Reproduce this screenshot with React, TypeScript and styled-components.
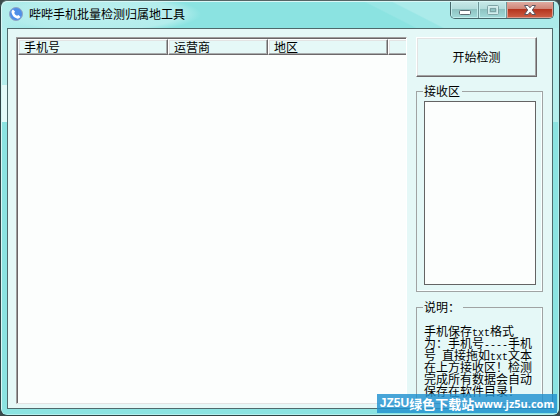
import React from "react";
import styled, { createGlobalStyle } from "styled-components";

const Global = createGlobalStyle`
  * { box-sizing: border-box; }
  body {
    margin: 0;
    background: #3c4a4c;
    font-family: "Noto Sans CJK SC", sans-serif;
    font-size: 12px;
    line-height: 16px;
    color: #000;
  }
  button, textarea { font: inherit; color: inherit; }
`;

const Window = styled.div`
  position: relative;
  min-height: 100vh;
  display: flex;
  flex-direction: column;
  padding: 0 6px 6px;
  border: 1px solid #2f4446;
  border-top-color: #566;
  border-radius: 7px;
  background:
    linear-gradient(to right, #b5eeed 0, #b5eeed 8px, transparent 8px) 0 0 / 100% 84px no-repeat,
    linear-gradient(to right, #e4faf9 0, #e4faf9 8px, transparent 8px) 0 84px / 100% 37px no-repeat,
    linear-gradient(to left, #b4efed 0, #b4efed 8px, transparent 8px) 0 0 / 100% 121px no-repeat,
    #8be3e1;
  box-shadow: inset 1px 1px 0 #d9f7f6, inset -1px -1px 0 #b4efee;
`;

const TitleBar = styled.header`
  height: 27px;
  margin: 0 -5px;
  padding-left: 6px;
  display: flex;
  align-items: flex-start;
  border-radius: 6px 6px 0 0;
  border-top: 1px solid #d9f7f6;
  background:
    radial-gradient(ellipse 105px 20px at 94px 12px, #bdf0ef 0%, #b3edec 80%, transparent 100%),
    linear-gradient(27deg, transparent 68%, #98e6e5 68.5%, #98e6e5 72.5%, #abebea 73%),
    linear-gradient(to right, #b3edec 0, #8be3e1 60px);
`;

const AppIcon = styled.svg`
  width: 16px;
  height: 16px;
  margin-top: 4px;
`;

const Title = styled.h1`
  flex: 1;
  margin: 3px 0 0 5px;
  font-size: 12px;
  line-height: 18px;
  font-weight: 400;
  white-space: nowrap;
`;

const Controls = styled.div`
  display: flex;
  height: 17px;
  margin-right: 4px;
  border: 1px solid #46676a;
  border-top: 0;
  border-radius: 0 0 5px 5px;
  overflow: hidden;
`;

const ControlButton = styled.button<{ $kind: "plain" | "close" }>`
  display: flex;
  align-items: center;
  justify-content: center;
  width: ${(p) => (p.$kind === "close" ? 46 : 27)}px;
  padding: 0;
  border: 1px solid ${(p) => (p.$kind === "close" ? "#dd9b8e" : "#c5eeee")};
  border-top: 0;
  background: ${(p) =>
    p.$kind === "close"
      ? "linear-gradient(#dfaca2 0%, #cf8374 48%, #b5351f 50%, #cb5c42 100%)"
      : "linear-gradient(#c6e8e7 0%, #b2dcdb 48%, #8fc3c2 50%, #a0d8d7 100%)"};
  & + & { box-shadow: -1px 0 0 #6f9597; margin-left: 1px; }
  svg { display: block; }
`;

const Client = styled.main`
  flex: 1;
  display: flex;
  gap: 9px;
  padding: 8px 9px 4px 8px;
  border: 1px solid #4f696b;
  background: #e5f8f7;
`;

const ListView = styled.div`
  flex: 1;
  border: 1px solid;
  border-color: #a09e9e #fff #e3e3e3 #a09e9e;
  box-shadow: inset 1px 1px 0 #696567;
  padding: 1px 0 0 1px;
  background: #fcfefd;
`;

const Table = styled.table`
  width: 100%;
  table-layout: fixed;
  border-collapse: separate;
  border-spacing: 0;
`;

const HeadCell = styled.th<{ $width?: number }>`
  width: ${(p) => (p.$width ? `${p.$width}px` : "auto")};
  height: 16px;
  padding: 0 0 0 5px;
  border-style: solid;
  border-width: 1px;
  border-color: #fff #6d696b #6d696b #fff;
  box-shadow: inset -1px -1px 0 #a9adad, inset 1px 1px 0 #e3e3e3;
  background: #e5f8f7;
  font-weight: 400;
  line-height: 14px;
  text-align: left;
  &:last-child {
    border-right: 0;
    box-shadow: inset 0 -1px 0 #a9adad, inset 1px 1px 0 #e3e3e3;
  }
`;

const Side = styled.aside`
  width: 127px;
  display: flex;
  flex-direction: column;
`;

const StartButton = styled.button`
  width: 121px;
  height: 40px;
  padding: 0;
  border: 1px solid;
  border-color: #fff #6b6769 #6b6769 #fff;
  box-shadow: inset -1px -1px 0 #a3a3a3, inset 1px 1px 0 #e3e3e3;
  background: #e5f8f7;
`;

const Group = styled.fieldset<{ $grow?: boolean }>`
  min-width: 0;
  margin: ${(p) => (p.$grow ? "7px" : "6px")} 0 0;
  padding: ${(p) => (p.$grow ? "10px 6px 6px 7px" : "2px 6px 6px 7px")};
  flex: ${(p) => (p.$grow ? "1 0 auto" : "none")};
  border: 1px solid #a0a3a3;
  box-shadow: inset -1px -1px 0 #f8ffff;
`;

const Legend = styled.legend<{ $wide?: boolean }>`
  margin-left: -1px;
  padding: 0 ${(p) => (p.$wide ? 3 : 2)}px 0 1px;
  line-height: 16px;
`;

const DropArea = styled.textarea`
  display: block;
  width: 100%;
  height: 184px;
  padding: 2px;
  resize: none;
  border: 1px solid #646464;
  border-radius: 0;
  outline: 0;
  background: #fcfefd;
`;

const Notes = styled.p`
  margin: 0;
  line-height: 12px;
  white-space: nowrap;
`;

const Latin = styled.span`
  font-family: "Liberation Mono", monospace;
  font-size: 10px;
  line-height: 0;
`;

const Watermark = styled.a`
  position: absolute;
  right: 2px;
  bottom: 2px;
  height: 19px;
  width: 180px;
  display: flex;
  align-items: center;
  justify-content: center;
  background: rgba(32, 145, 207, 0.82);
  color: #fff;
  text-decoration: none;
  font-weight: 700;
  font-size: 13px;
  line-height: 19px;
  white-space: nowrap;
`;

const Brand = styled.span`
  font-family: "Liberation Sans", sans-serif;
  font-size: 12px;
`;

const Domain = styled.span`
  font-family: "Open Sans", sans-serif;
  font-size: 11px;
`;

const columns = [
  { name: "手机号", width: 150 },
  { name: "运营商", width: 100 },
  { name: "地区", width: 120 },
];

export default function App() {
  return (
    <>
      <Global />
      <Window>
        <TitleBar>
          <AppIcon viewBox="0 0 16 16" aria-hidden="true">
            <circle cx="8" cy="8" r="6.5" fill="#4f8fe8" stroke="#8fa6c4" />
            <path
              d="M5 3.5 L7 5.5 L6.2 7 Q7 9 9 9.8 L10.5 9 L12.5 11 Q11 13 9 12.6 Q4.2 11 3.4 6 Q3.6 4.2 5 3.5Z"
              fill="#fff"
            />
          </AppIcon>
          <Title>哔哔手机批量检测归属地工具</Title>
          <Controls>
            <ControlButton $kind="plain" aria-label="最小化">
              <svg width="14" height="16" viewBox="0 0 14 16">
                <rect x="1.5" y="8.5" width="11" height="4" rx="1" fill="#fff" stroke="#5c6b73" />
              </svg>
            </ControlButton>
            <ControlButton $kind="plain" aria-label="最大化" disabled>
              <svg width="14" height="16" viewBox="0 0 14 16" fill="none">
                <rect x="2.5" y="4.5" width="9" height="7" stroke="#d6eeee" strokeWidth="2" />
                <rect x="1.5" y="3.5" width="11" height="9" rx="1" stroke="#7ea4a6" />
                <rect x="4.5" y="6.5" width="5" height="3" stroke="#7ea4a6" />
              </svg>
            </ControlButton>
            <ControlButton $kind="close" aria-label="关闭">
              <svg width="14" height="16" viewBox="0 0 14 16">
                <path
                  d="M1.5 3.5H5L7 5.8L9 3.5H12.5L9.3 8L12.5 12.5H9L7 10.2L5 12.5H1.5L4.7 8Z"
                  fill="#fff"
                  stroke="#5b5660"
                />
              </svg>
            </ControlButton>
          </Controls>
        </TitleBar>
        <Client>
          <ListView>
            <Table>
              <thead>
                <tr>
                  {columns.map((c) => (
                    <HeadCell key={c.name} $width={c.width} scope="col">
                      {c.name}
                    </HeadCell>
                  ))}
                  <HeadCell as="td" />
                </tr>
              </thead>
            </Table>
          </ListView>
          <Side>
            <StartButton type="button">开始检测</StartButton>
            <Group>
              <Legend>
                <label htmlFor="receive">接收区</label>
              </Legend>
              <DropArea id="receive" />
            </Group>
            <Group $grow>
              <Legend $wide>说明：</Legend>
              <Notes>
                手机保存<Latin>txt</Latin>格式
                <br />
                为：手机号<Latin>----</Latin>手机
                <br />
                号<Latin> </Latin>直接拖如<Latin>txt</Latin>文本
                <br />
                在上方接收区！检测
                <br />
                完成所有数据会自动
                <br />
                保存在软件目录！
              </Notes>
            </Group>
          </Side>
        </Client>
        <Watermark href="#">
          <Brand>JZ5U</Brand>
          <span>绿色下载站</span>
          <Domain>www.jz5u.com</Domain>
        </Watermark>
      </Window>
    </>
  );
}
